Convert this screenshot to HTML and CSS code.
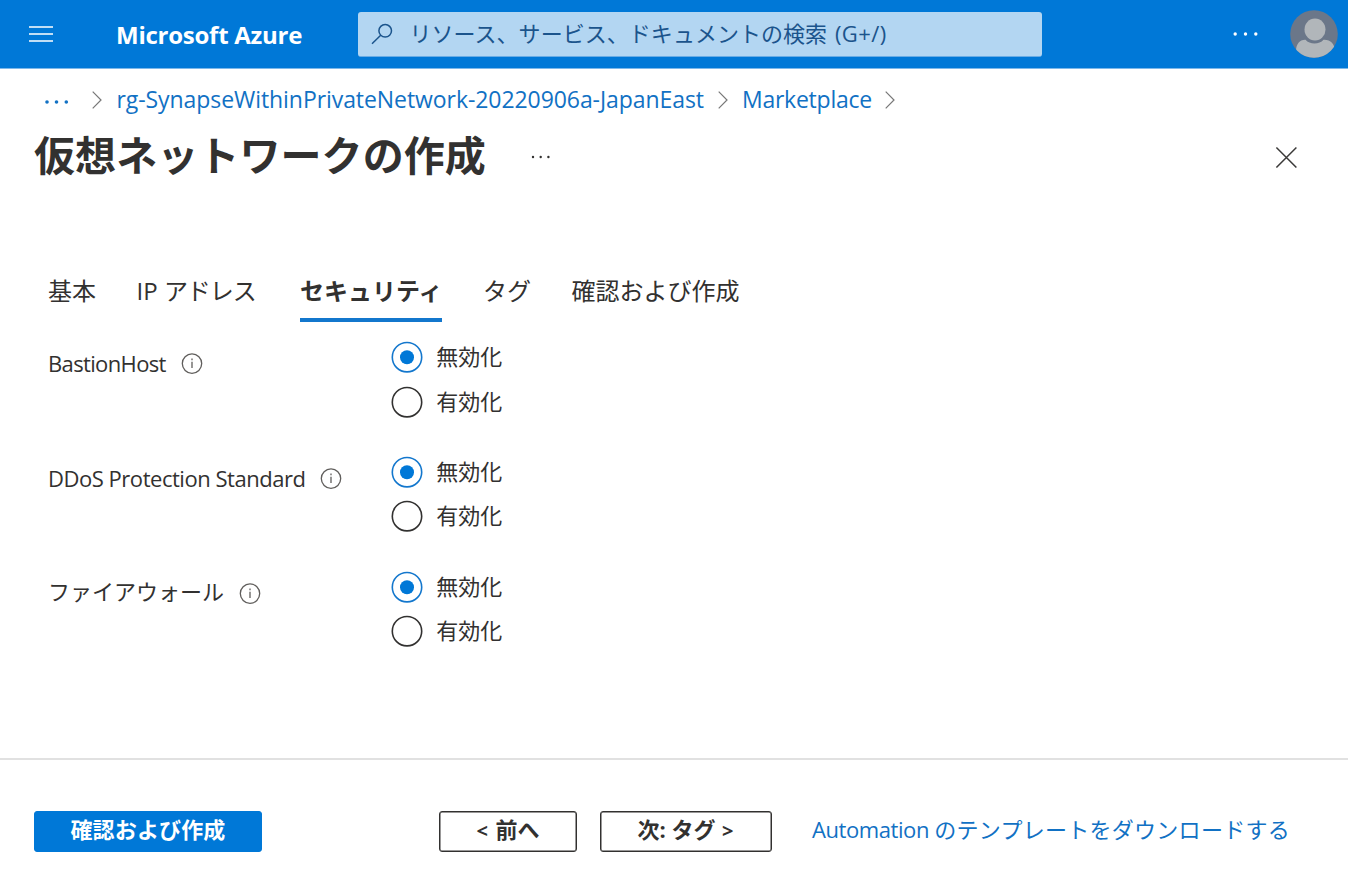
FILE: index.html
```html
<!DOCTYPE html>
<html lang="ja">
<head>
<meta charset="utf-8">
<title>仮想ネットワークの作成 - Microsoft Azure</title>
<link rel="stylesheet" href="styles.css">
</head>
<body>
<header class="topbar">
  <svg class="menu" width="24" height="18" viewBox="0 0 24 18" stroke="#fff" stroke-width="1.7"><path d="M0 2h24M0 9h24M0 16h24"/></svg>
  <div class="brand"><span>Microsoft Azure</span></div>
  <div class="search">
    <svg width="24" height="24" viewBox="0 0 24 24" fill="none" stroke="#1b548c" stroke-width="1.5"><circle cx="14.2" cy="8.8" r="6.3"/><path d="M9.700 13.200 1 21.700"/></svg>
    <span class="search-text">リソース、サービス、ドキュメントの検索 <span class="key">(G+/)</span></span>
  </div>
  <svg class="more" width="26" height="6" viewBox="0 0 26 6" fill="#fff"><circle cx="2.2" cy="3" r="1.700"/><circle cx="12.500" cy="3" r="1.700"/><circle cx="22.800" cy="3" r="1.700"/></svg>
  <svg class="avatar" width="48" height="48" viewBox="0 0 48 48"><defs><clipPath id="face"><circle cx="24" cy="24" r="23.800"/></clipPath></defs><g clip-path="url(#face)"><path fill="#6b7789" d="M0 0h48v48H0z"/><path fill="#b1b6ba" d="M6 48v-7c0-7 4-11.500 9.500-11.200 2 2.500 5.500 3.700 9 3.700s7-1.200 9-3.700C40 29.300 45 34 45 41v7z"/><ellipse cx="25" cy="19.500" rx="10.500" ry="11" fill="#b1b6ba"/></g></svg>
</header>
<nav class="crumbs">
  <svg class="crumb-dots" width="24" height="6" viewBox="0 0 24 6" fill="#1171c4"><circle cx="2" cy="3" r="1.800"/><circle cx="11.500" cy="3" r="1.800"/><circle cx="21.300" cy="3" r="1.800"/></svg>
  <svg class="chev c1" width="10" height="18" viewBox="0 0 10 18"><path d="M.7 .7 9 9 .7 17.300"/></svg>
  <a class="group"><span>rg-SynapseWithinPrivateNetwork-20220906a-JapanEast</span></a>
  <svg class="chev" width="10" height="18" viewBox="0 0 10 18"><path d="M.7 .7 9 9 .7 17.300"/></svg>
  <a class="market"><span>Marketplace</span></a>
  <svg class="chev" width="10" height="18" viewBox="0 0 10 18"><path d="M.7 .7 9 9 .7 17.300"/></svg>
</nav>
<div class="heading">
  <h1>仮想ネットワークの作成</h1>
  <svg class="title-dots" width="20" height="4" viewBox="0 0 20 4" fill="#323130"><circle cx="2" cy="2" r="1.200"/><circle cx="9.700" cy="2" r="1.200"/><circle cx="17.400" cy="2" r="1.200"/></svg>
  <svg class="close" width="22" height="22" viewBox="0 0 22 22" stroke="#3b3a39" stroke-width="1.500"><path d="m1.400 1.500 20 20M21.400 1.500l-20 20"/></svg>
</div>
<nav class="tabs">
  <a class="t1">基本</a><a class="t2"><span class="ip">IP </span>アドレス</a><a class="t3 active">セキュリティ</a><a class="t4">タグ</a><a class="t5">確認および作成</a>
</nav>
<main class="form">
  <section class="field">
    <div class="label"><span class="latin">BastionHost</span><svg class="info" width="22" height="22" viewBox="0 0 22 22"><circle cx="11" cy="10.600" r="9.700"/><path d="M11 8.800v6.300M11 5.600v1.600"/></svg></div>
    <div class="options">
      <div class="option"><svg class="radio on" width="32" height="32" viewBox="0 0 32 32"><circle cx="16" cy="16.200" r="14.700"/><circle class="dot" cx="16" cy="16.200" r="7"/></svg><span>無効化</span></div>
      <div class="option"><svg class="radio" width="32" height="32" viewBox="0 0 32 32"><circle cx="16" cy="16.200" r="14.700"/></svg><span>有効化</span></div>
    </div>
  </section>
  <section class="field">
    <div class="label"><span class="latin wide">DDoS Protection Standard</span><svg class="info" width="22" height="22" viewBox="0 0 22 22"><circle cx="11" cy="10.600" r="9.700"/><path d="M11 8.800v6.300M11 5.600v1.600"/></svg></div>
    <div class="options">
      <div class="option"><svg class="radio on" width="32" height="32" viewBox="0 0 32 32"><circle cx="16" cy="16.200" r="14.700"/><circle class="dot" cx="16" cy="16.200" r="7"/></svg><span>無効化</span></div>
      <div class="option"><svg class="radio" width="32" height="32" viewBox="0 0 32 32"><circle cx="16" cy="16.200" r="14.700"/></svg><span>有効化</span></div>
    </div>
  </section>
  <section class="field">
    <div class="label"><span class="kana">ファイアウォール</span><svg class="info" width="22" height="22" viewBox="0 0 22 22"><circle cx="11" cy="10.600" r="9.700"/><path d="M11 8.800v6.300M11 5.600v1.600"/></svg></div>
    <div class="options">
      <div class="option"><svg class="radio on" width="32" height="32" viewBox="0 0 32 32"><circle cx="16" cy="16.200" r="14.700"/><circle class="dot" cx="16" cy="16.200" r="7"/></svg><span>無効化</span></div>
      <div class="option"><svg class="radio" width="32" height="32" viewBox="0 0 32 32"><circle cx="16" cy="16.200" r="14.700"/></svg><span>有効化</span></div>
    </div>
  </section>
</main>
<footer class="footer">
  <button class="btn primary">確認および作成</button>
  <button class="btn prev"><span class="angle">&lt; </span>前へ</button>
  <button class="btn next">次: タグ<span class="angle"> &gt;</span></button>
  <a class="download"><span class="auto">Automation </span>のテンプレートをダウンロードする</a>
</footer>
</body>
</html>
```
FILE: styles.css
```css
* { box-sizing: border-box; }
body { margin: 0; width: 1348px; height: 886px; display: flex; flex-direction: column; overflow: hidden; background: #fff; color: #323130; font-family: "Open Sans", "Noto Sans CJK JP", sans-serif; font-size: 22px; white-space: nowrap; }
svg { flex: none; display: block; }
.topbar { height: 69px; background: #0078d7; border-bottom: 1px solid #7db8ea; display: flex; align-items: center; padding-left: 29px; }
.brand { margin-left: 63px; width: 241.5px; color: #fff; font-size: 24px; font-weight: 700; letter-spacing: -.25px; line-height: 32px; padding-top: 1px; }
.search { width: 684px; height: 45px; border-radius: 3px; background: #b3d6f2; color: #1b548c; display: flex; align-items: center; padding-left: 13px; gap: 15px; line-height: 42px; border-bottom: 1px solid #69ace5; }
.search-text { height: 44px; letter-spacing: .04px; }
.key { margin-left: 2px; letter-spacing: .4px; }
.more { margin-left: 191px; }
.avatar { margin-left: 31px; }
.crumbs { height: 61px; display: flex; align-items: center; padding-left: 45px; color: #1171c4; font-size: 23px; line-height: 30px; }
.crumb-dots { margin-top: 5px; }
.chev { fill: none; stroke: #777; stroke-width: 1.2; }
.c1 { margin-left: 23px; }
.group { margin-left: 14.5px; width: 601.5px; padding-bottom: 2px; letter-spacing: -.07px; }
.market { margin-left: 14px; width: 143px; padding-bottom: 2px; letter-spacing: -.25px; }
.heading { height: 54px; display: flex; align-items: center; padding-left: 34px; }
h1 { margin: 0; width: 497px; height: 54px; font-size: 41px; font-weight: 700; line-height: 50px; letter-spacing: .08px; }
.close { margin-left: 724px; }
.tabs { margin-top: 78px; height: 60px; display: flex; padding-left: 48px; font-size: 24px; line-height: 58px; }
.t1 { width: 88.5px; }
.t2 { width: 163.5px; letter-spacing: -1px; }
.ip { letter-spacing: 0; }
.t3 { width: 142px; margin-right: 41px; }
.t4 { width: 88.5px; }
.active { font-weight: 700; border-bottom: 4px solid #1377cd; }
.form { height: 436px; padding: 13px 0 0 48px; display: flex; flex-direction: column; gap: 26px; }
.field { display: flex; }
.label { width: 343px; height: 58px; display: flex; align-items: center; gap: 15px; line-height: 30px; }
.latin { letter-spacing: -.64px; padding-bottom: 2px; }
.wide { letter-spacing: -.47px; }
.kana { padding-bottom: 5px; }
.info { fill: none; stroke: #605e5c; stroke-width: 1.3; }
.option { display: flex; align-items: center; gap: 13.2px; height: 44.4px; line-height: 30px; }
.option span { padding-bottom: 2px; }
.radio { fill: none; stroke: #323130; stroke-width: 1.6; }
.on { stroke: #1377cd; }
.dot { fill: #0078d7; stroke: none; }
.footer { height: 128px; border-top: 2px solid #e1e1e1; display: flex; align-items: center; padding: 17px 0 0 34px; }
.btn { height: 41px; border: 1px solid #323130; box-shadow: inset 0 0 0 .5px #323130; border-radius: 3px; background: #fff; color: #323130; font: 700 22px/34px "Open Sans", "Noto Sans CJK JP", sans-serif; padding: 0 0 5px; }
.primary { width: 228px; border-color: #0078d7; box-shadow: none; background: #0078d7; color: #fff; letter-spacing: .15px; }
.prev { width: 138px; margin-left: 177px; }
.next { width: 172px; margin-left: 23px; }
.angle { font-size: 20px; font-weight: 700; letter-spacing: 1.2px; }
.download { margin-left: 40px; padding-bottom: 7px; color: #1171c4; letter-spacing: .27px; }
.auto { letter-spacing: -.42px; }
```
